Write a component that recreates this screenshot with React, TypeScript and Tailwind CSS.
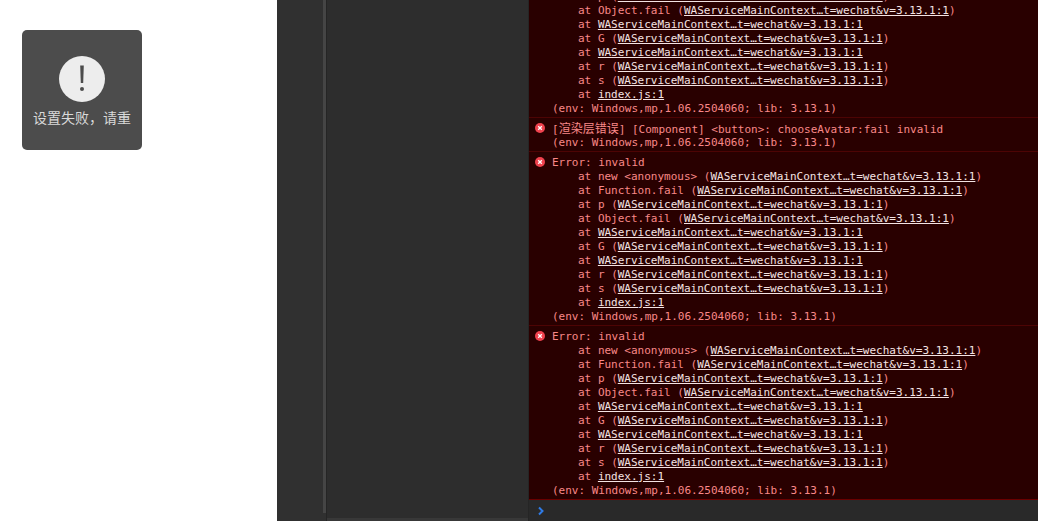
import type { ReactNode } from 'react';

const MONO = 'font-["DejaVu_Sans_Mono","Noto_Sans_CJK_SC",monospace]';

// Stack frames of one error, in the order the console prints them
const FULL_STACK: [string, string, boolean][] = [
  ['new <anonymous>', 'WAServiceMainContext…t=wechat&v=3.13.1:1', true],
  ['Function.fail', 'WAServiceMainContext…t=wechat&v=3.13.1:1', true],
  ['p', 'WAServiceMainContext…t=wechat&v=3.13.1:1', true],
  ['Object.fail', 'WAServiceMainContext…t=wechat&v=3.13.1:1', true],
  ['', 'WAServiceMainContext…t=wechat&v=3.13.1:1', false],
  ['G', 'WAServiceMainContext…t=wechat&v=3.13.1:1', true],
  ['', 'WAServiceMainContext…t=wechat&v=3.13.1:1', false],
  ['r', 'WAServiceMainContext…t=wechat&v=3.13.1:1', true],
  ['s', 'WAServiceMainContext…t=wechat&v=3.13.1:1', true],
  ['', 'index.js:1', false],
];

const ENV = '(env: Windows,mp,1.06.2504060; lib: 3.13.1)';

function ErrorIcon() {
  return (
    <svg viewBox="0 0 10 10" className="absolute left-[6px] top-[5px] h-[10px] w-[10px]">
      <circle cx="5" cy="5" r="5" fill="#f0424e" />
      <path d="M3.200 3.200l3.600 3.600M6.800 3.200l-3.600 3.600" stroke="#fff" strokeWidth="1.300" />
    </svg>
  );
}

function Line({ children }: { children: ReactNode }) {
  return <div className="h-[14px] whitespace-pre leading-[14px]">{children}</div>;
}

function Frame({ name, file, wrapped }: { name: string; file: string; wrapped: boolean }) {
  const link = <span className="text-[#f4e3e3] underline">{file}</span>;
  return (
    <div className="h-[14px] whitespace-pre pl-[26px] leading-[14px]">
      {'at '}
      {name ? `${name} ` : ''}
      {wrapped ? <>({link})</> : link}
    </div>
  );
}

// The first group is scrolled off the top, so it starts partway down its stack
function ErrorGroup({ title, from = 0, stack = true, scrolled = false }: { title?: ReactNode; from?: number; stack?: boolean; scrolled?: boolean }) {
  return (
    <div className="relative border-b border-[#4d0404] pb-[1px] pl-[23px] pt-[4px] last:border-[#6a0000]">
      {!scrolled && <ErrorIcon />}
      {!scrolled && <Line>{title ?? 'Error: invalid'}</Line>}
      {stack && FULL_STACK.slice(from).map(([name, file, wrapped], i) => (
        <Frame key={i} name={name} file={file} wrapped={wrapped} />
      ))}
      <Line>{ENV}</Line>
    </div>
  );
}

export default function App() {
  return (
    <div className="flex h-[521px] w-[1038px] overflow-hidden bg-white">
      {/* Simulator side */}
      <div className="w-[277px] shrink-0 pl-[22px] pt-[30px]">
        <div className="flex h-[120px] w-[120px] flex-col items-center rounded-[5px] bg-[#4c4c4c] pt-[26px]">
          <div className='flex h-[46px] w-[46px] items-center justify-center rounded-full bg-[#ededed]'>
            <svg viewBox="0 0 46 46" className="h-[46px] w-[46px]">
              <path d="M21.200 9.500h3.600L24.200 27h-2.400z" fill="#4c4c4c" />
              <circle cx="23" cy="33" r="2" fill="#4c4c4c" />
            </svg>
          </div>
          <div className='mt-[5px] font-["Noto_Sans_CJK_SC",sans-serif] text-[14px] leading-[20px] text-[#d9d9d9]'>
            设置失败，请重
          </div>
        </div>
      </div>

      {/* Editor pane with its scrollbar */}
      <div className="flex w-[251px] shrink-0 bg-[#303030]">
        <div className="w-[46px] shrink-0" />
        <div className="h-[513px] w-[3px] shrink-0 bg-[#454545]" />
        <div className="flex flex-1 flex-col border-l border-[#252525] bg-[#2d2d2d]">
          <div className="flex-1" />
          <div className="h-[3px] bg-[#383838]" />
        </div>
      </div>

      {/* Console */}
      <div className={`flex min-w-0 flex-1 flex-col border-l border-[#252525] bg-[#292929] text-[11px] text-[#f98888] ${MONO}`}>
        <div className="flex min-h-0 flex-1 flex-col justify-end overflow-hidden bg-[#290000]">
          <ErrorGroup scrolled from={2} />
          <ErrorGroup
            title={<>[<span className="text-[12px]">渲染层错误</span>] [Component] &lt;button&gt;: chooseAvatar:fail invalid</>}
            stack={false}
          />
          <ErrorGroup />
          <ErrorGroup />
        </div>
        <div className="flex h-[21px] shrink-0 items-center pl-[8px]">
          <svg viewBox="0 0 8 10" className="h-[10px] w-[8px]">
            <path d="M2 1.500l3.500 3.500-3.500 3.500" fill="none" stroke="#2f7be6" strokeWidth="2" />
          </svg>
        </div>
      </div>
    </div>
  );
}
